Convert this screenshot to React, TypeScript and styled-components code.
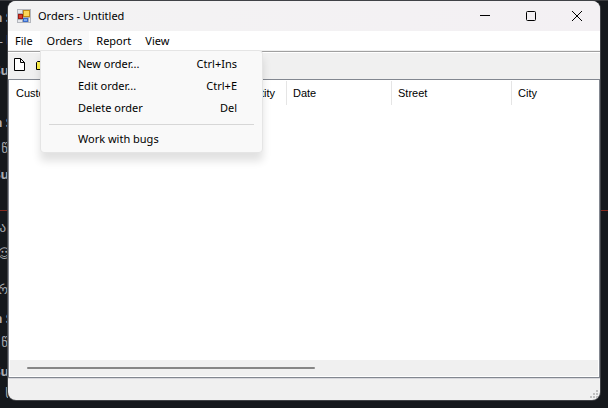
import React from "react";
import styled, { createGlobalStyle, css } from "styled-components";

const GlobalStyle = createGlobalStyle`
  * { box-sizing: border-box; }
  html, body { margin: 0; background: #15181c; }
  body { font-family: "Noto Sans", "Open Sans", sans-serif; font-size: 11px; color: #000; overflow: hidden; }
  button { font: inherit; color: inherit; border: 0; background: none; padding: 0; margin: 0; }
`;

const Desktop = styled.div`
  display: grid;
  grid-template-columns: 8px minmax(0, 1fr) 8px;
  grid-template-rows: minmax(0, 1fr) 8px;
  height: 100vh;
  padding-top: 1px;
  background: linear-gradient(#3a3b3e 0 1px, #15181c 1px);
`;

const Margin = styled.div`
  grid-row: 1;
  min-width: 0;
  overflow: hidden;
  display: flex;
  flex-direction: column;
`;

const Fragment = styled.span<{ $height: number; $bold?: boolean; $overhang?: number }>`
  flex: none;
  display: flex;
  align-items: flex-end;
  justify-content: flex-end;
  height: ${(p) => p.$height}px;
  margin-right: ${(p) => -(p.$overhang ?? 0)}px;
  line-height: 20px;
  white-space: pre;
  font-size: 13px;
  font-weight: ${(p) => (p.$bold ? 700 : 400)};
  color: #a9acb0;
  font-family: "Noto Sans", "DejaVu Sans", sans-serif;
`;

const Divider = styled.div<{ $top: number }>`
  flex: none;
  height: 1px;
  margin-top: ${(p) => p.$top}px;
  background: #86291d;
`;

const Window = styled.main`
  grid-row: 1;
  grid-column: 2;
  position: relative;
  display: flex;
  flex-direction: column;
  min-height: 0;
  border-radius: 8px;
  overflow: hidden;
  background: #f0f0f0;
  box-shadow: 0 0 0 1px #404246;
`;

const TitleBar = styled.header`
  flex: none;
  display: flex;
  align-items: center;
  height: 30px;
  padding-left: 9px;
  background: linear-gradient(90deg, #f3f3f3, #f3f0f3);
`;

const Title = styled.h1`
  flex: 1;
  margin: 0 0 0 7px;
  font-size: 11px;
  font-weight: 400;
  line-height: 16px;
`;

const CaptionButton = styled.button`
  display: flex;
  align-items: center;
  justify-content: center;
  width: 46px;
  height: 30px;
`;

const MenuBar = styled.nav`
  flex: none;
  display: flex;
  height: 20px;
  background: #fff;
  border-bottom: 1px solid #f0f0f0;
`;

const MenuButton = styled.button<{ $open?: boolean }>`
  height: 19px;
  padding: 0 7px;
  line-height: 19px;
  ${(p) => p.$open && css`background: #f9f9f9;`}
`;

const ToolBar = styled.div`
  flex: none;
  display: flex;
  align-items: center;
  gap: 6px;
  height: 28px;
  padding-left: 3px;
  border-top: 1px solid #a0a0a0;
  box-shadow: inset 0 1px #fff;
`;

const ToolButton = styled.button`
  display: flex;
  width: 16px;
  height: 16px;
`;

const ListView = styled.section`
  flex: 1;
  min-height: 0;
  display: flex;
  flex-direction: column;
  border: 1px solid #828790;
  background: #fff;
  padding: 1px;
`;

const Columns = styled.table`
  width: 100%;
  table-layout: fixed;
  border-collapse: separate;
  border-spacing: 0;
  font-family: "Liberation Sans", Arial, sans-serif;
  font-size: 11px;
`;

const ColumnHead = styled.th<{ $width?: number }>`
  width: ${(p) => (p.$width ? `${p.$width}px` : "auto")};
  height: 24px;
  padding: 0 6px;
  font-weight: 400;
  text-align: left;
  border-right: 1px solid #e5e5e5;
  &:last-child { border-right: 0; }
`;

const ScrollBar = styled.div`
  flex: none;
  display: flex;
  align-items: center;
  height: 16px;
  margin-top: auto;
  padding: 0 17px;
  background: #f0f0f0;
`;

const Thumb = styled.div`
  width: 52%;
  height: 2px;
  border-radius: 1px;
  background: #868686;
`;

const StatusBar = styled.footer`
  flex: none;
  display: flex;
  align-items: flex-end;
  justify-content: flex-end;
  height: 22px;
  border-top: 1px solid #d7d7dc;
`;

const Menu = styled.ul`
  position: absolute;
  top: 49px;
  left: 32px;
  width: 223px;
  margin: 0;
  padding: 3px 8px 1px;
  list-style: none;
  background: #f9f9f9;
  border: 1px solid #e5e5e5;
  border-radius: 0 4px 4px 4px;
  box-shadow: 0 8px 8px rgba(0, 0, 0, 0.12);
`;

const MenuItem = styled.button`
  display: flex;
  justify-content: space-between;
  width: 100%;
  height: 22px;
  padding: 0 17px 0 29px;
  line-height: 20px;
`;

const Separator = styled.li`
  height: 1px;
  margin: 4px 0;
  background: #d7d7d7;
`;

function AppIcon() {
  return (
    <svg width="14" height="14" viewBox="0 0 14 14" aria-hidden="true">
      <rect x=".5" y=".5" width="13" height="13" fill="#e4e6ea" stroke="#b4b7bd" />
      <path d="M1 4.500h5M5.500 1v12M6 8.500h7M11.500 9v4M1 10.500h4" stroke="#a9acb4" />
      <rect x="1.500" y="5.500" width="4" height="4" fill="#d8402f" stroke="#9c1a14" />
      <rect x="6.500" y="1.500" width="6" height="6" fill="#fbd75a" stroke="#c08a18" />
      <rect x="6.500" y="9.500" width="4" height="3" fill="#79aaf5" stroke="#3a6bc8" />
    </svg>
  );
}

const columns = [
  { label: "Customer", width: 120 },
  { label: "Product", width: 98 },
  { label: "Quantity", width: 59 },
  { label: "Date", width: 105 },
  { label: "Street", width: 120 },
  { label: "City" },
];

const commands = [
  { label: "New order...", keys: "Ctrl+Ins" },
  { label: "Edit order...", keys: "Ctrl+E" },
  { label: "Delete order", keys: "Del" },
];

export default function App() {
  return (
    <>
      <GlobalStyle />
      <Desktop>
        <Margin aria-hidden="true">
          <Fragment $height={26} $bold $overhang={5}>n S</Fragment>
          <Fragment $height={24} $overhang={5}>- ს</Fragment>
          <Fragment $height={29} $bold $overhang={1}>Su</Fragment>
          <Fragment $height={52} $bold $overhang={5}>n S</Fragment>
          <Fragment $height={26} $overhang={4}>წ(</Fragment>
          <Fragment $height={26} $bold $overhang={1}>Su</Fragment>
          <Divider $top={26} />
          <Fragment $height={26} $overhang={-2}>ა</Fragment>
          <Fragment $height={26} $overhang={3}>☺</Fragment>
          <Fragment $height={36}>რ</Fragment>
          <Fragment $height={29} $bold $overhang={5}>n S</Fragment>
          <Fragment $height={24}>წ</Fragment>
          <Fragment $height={29} $bold $overhang={1}>Su</Fragment>
          <Fragment $height={22} $overhang={4}>ს</Fragment>
        </Margin>
        <Window>
          <TitleBar>
            <AppIcon />
            <Title>Orders - Untitled</Title>
            <CaptionButton aria-label="Minimize">
              <svg width="10" height="10"><path d="M0 4.500h10" stroke="#000" /></svg>
            </CaptionButton>
            <CaptionButton aria-label="Maximize">
              <svg width="10" height="10"><rect x=".5" y=".5" width="9" height="9" rx="1" fill="none" stroke="#000" /></svg>
            </CaptionButton>
            <CaptionButton aria-label="Close">
              <svg width="10" height="10"><path d="M0 0l10 10M10 0L0 10" stroke="#000" /></svg>
            </CaptionButton>
          </TitleBar>
          <MenuBar>
            <MenuButton>File</MenuButton>
            <MenuButton $open aria-haspopup="menu" aria-expanded="true">Orders</MenuButton>
            <MenuButton>Report</MenuButton>
            <MenuButton>View</MenuButton>
          </MenuBar>
          <ToolBar>
            <ToolButton aria-label="New">
              <svg width="16" height="16"><path d="M3.500 .5h6l4 4v8h-10zM9.500 .5v4h4" fill="#fff" stroke="#000" /></svg>
            </ToolButton>
            <ToolButton aria-label="Open">
              <svg width="16" height="16"><path d="M3.500 11.500v-7l1-1h3l1 1h5v7z" fill="#fff34a" stroke="#000" /></svg>
            </ToolButton>
          </ToolBar>
          <ListView>
            <Columns>
              <thead>
                <tr>
                  {columns.map((c) => (
                    <ColumnHead key={c.label} $width={c.width} scope="col">{c.label}</ColumnHead>
                  ))}
                </tr>
              </thead>
            </Columns>
            <ScrollBar><Thumb /></ScrollBar>
          </ListView>
          <StatusBar>
            <svg width="12" height="12" fill="#bfbfbf" aria-hidden="true">
              <path d="M8 2h2v2h-2zM5 5h2v2h-2zM8 5h2v2h-2zM2 8h2v2h-2zM5 8h2v2h-2zM8 8h2v2h-2z" />
            </svg>
          </StatusBar>
          <Menu>
            {commands.map((c) => (
              <li key={c.label}>
                <MenuItem><span>{c.label}</span><span>{c.keys}</span></MenuItem>
              </li>
            ))}
            <Separator role="separator" />
            <li><MenuItem>Work with bugs</MenuItem></li>
          </Menu>
        </Window>
        <Margin aria-hidden="true">
          <Divider $top={209} />
        </Margin>
      </Desktop>
    </>
  );
}
